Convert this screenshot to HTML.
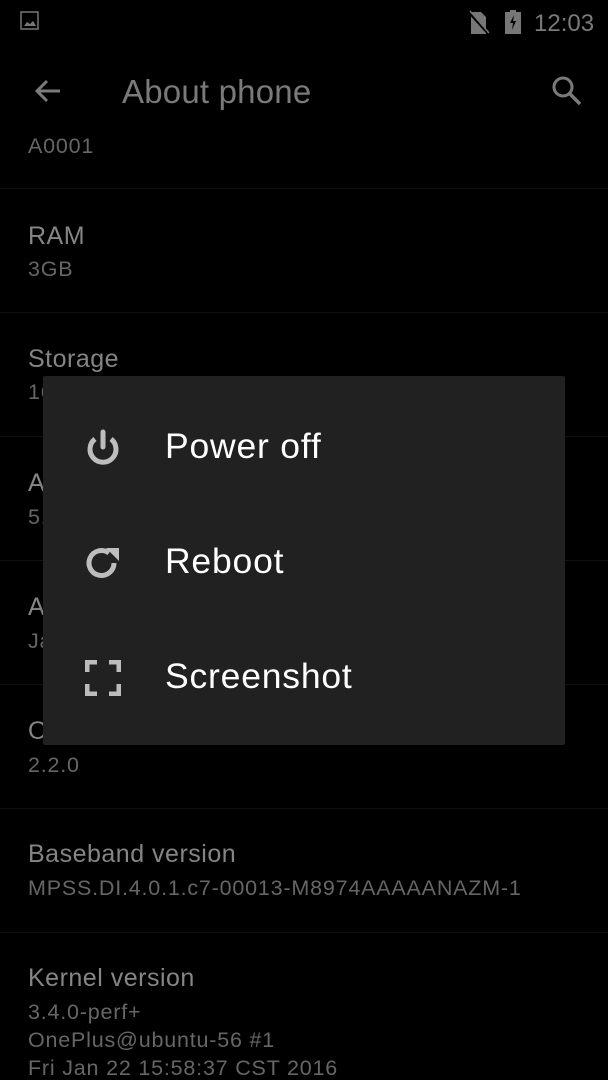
<!DOCTYPE html>
<html><head><style>
body{margin:0;width:608px;height:1080px;background:#000;overflow:hidden;position:relative;font-family:"Liberation Sans",sans-serif}
.t{position:absolute;left:28px;font-size:25px;letter-spacing:0.5px;color:#858585;white-space:nowrap;line-height:1}
.s{position:absolute;left:28px;font-size:21.5px;letter-spacing:0.8px;color:#666;white-space:nowrap;line-height:1}
.d{position:absolute;left:0;width:608px;height:1px;background:#111}
#dlg{position:absolute;left:43px;top:376px;width:522px;height:369px;background:#212121;border-radius:2px}
.i{position:absolute;left:122px;font-size:35.5px;letter-spacing:0.8px;color:#fff;line-height:1}
svg{position:absolute}
</style></head><body>
<svg style="left:20px;top:11px" width="20" height="20" viewBox="0 0 20 20"><rect x="1" y="1" width="17" height="17" fill="none" stroke="#777" stroke-width="1.5"/><path d="M4 15 L7 11 L10 13 L13 10 L16 15Z" fill="#777"/></svg>
<svg style="left:468px;top:10px" width="28" height="24" viewBox="0 0 28 24"><path d="M3 2h10l5 5v17H3z" fill="#777"/><line x1="1" y1="2" x2="20" y2="23" stroke="#000" stroke-width="3"/><line x1="2" y1="1" x2="21" y2="23" stroke="#777" stroke-width="1.5"/></svg>
<svg style="left:504px;top:9px" width="18" height="26" viewBox="0 0 18 26"><rect x="6" y="1" width="6" height="3" fill="#777"/><rect x="1" y="3" width="16" height="22" fill="#777"/><path d="M10 6 L6 14 H9 L8 21 L12 12 H9Z" fill="#000"/></svg>
<div style="position:absolute;left:534px;top:10px;font-size:24px;color:#7a7a7a">12:03</div>
<svg style="left:32px;top:76px" width="32" height="32" viewBox="0 0 32 32"><path d="M28 15H6M15 5L5 15l10 10" fill="none" stroke="#7a7a7a" stroke-width="3"/></svg>
<div style="position:absolute;left:122px;top:73px;font-size:33px;letter-spacing:0.2px;color:#7a7a7a">About phone</div>
<svg style="left:550px;top:74px" width="34" height="34" viewBox="0 0 34 34"><circle cx="13" cy="13" r="9" fill="none" stroke="#7a7a7a" stroke-width="3"/><path d="M20 20l10 10" stroke="#7a7a7a" stroke-width="3.5"/></svg>
<div class="s" style="top:136px">A0001</div>
<div class="d" style="top:188px"></div>
<div class="t" style="top:224px">RAM</div><div class="s" style="top:259px">3GB</div>
<div class="d" style="top:312px"></div>
<div class="t" style="top:347px">Storage</div><div class="s" style="top:382px">16GB</div>
<div class="d" style="top:436px"></div>
<div class="t" style="top:471px">Android version</div><div class="s" style="top:507px">5.1.1</div>
<div class="d" style="top:560px"></div>
<div class="t" style="top:595px">Android security patch level</div><div class="s" style="top:631px">January 1, 2016</div>
<div class="d" style="top:684px"></div>
<div class="t" style="top:719px">OxygenOS version</div><div class="s" style="top:755px">2.2.0</div>
<div class="d" style="top:808px"></div>
<div class="t" style="top:842px">Baseband version</div><div class="s" style="top:878px">MPSS.DI.4.0.1.c7-00013-M8974AAAAANAZM-1</div>
<div class="d" style="top:932px"></div>
<div class="t" style="top:966px">Kernel version</div>
<div class="s" style="top:1002px">3.4.0-perf+</div>
<div class="s" style="top:1030px">OnePlus@ubuntu-56 #1</div>
<div class="s" style="top:1058px">Fri Jan 22 15:58:37 CST 2016</div>
<div id="dlg">
<svg style="left:40px;top:53px" width="40" height="40" viewBox="0 0 40 40"><path d="M12 10 A13 13 0 1 0 28 10" fill="none" stroke="#bdbdbd" stroke-width="5"/><line x1="20" y1="3" x2="20" y2="18" stroke="#bdbdbd" stroke-width="5" stroke-linecap="round"/></svg>
<div class="i" style="top:53px">Power off</div>
<svg style="left:40px;top:168px" width="40" height="40" viewBox="0 0 40 40"><path d="M31 19 A12.5 12.5 0 1 1 26 9" fill="none" stroke="#bdbdbd" stroke-width="5"/><path d="M23 4 L36 4 L36 17Z" fill="#bdbdbd"/></svg>
<div class="i" style="top:168px">Reboot</div>
<svg style="left:42px;top:284px" width="36" height="36" viewBox="0 0 36 36"><path d="M2 12V2h10M24 2h10v10M34 24v10H24M12 34H2V24" fill="none" stroke="#bdbdbd" stroke-width="5"/></svg>
<div class="i" style="top:283px">Screenshot</div>
</div>
</body></html>
